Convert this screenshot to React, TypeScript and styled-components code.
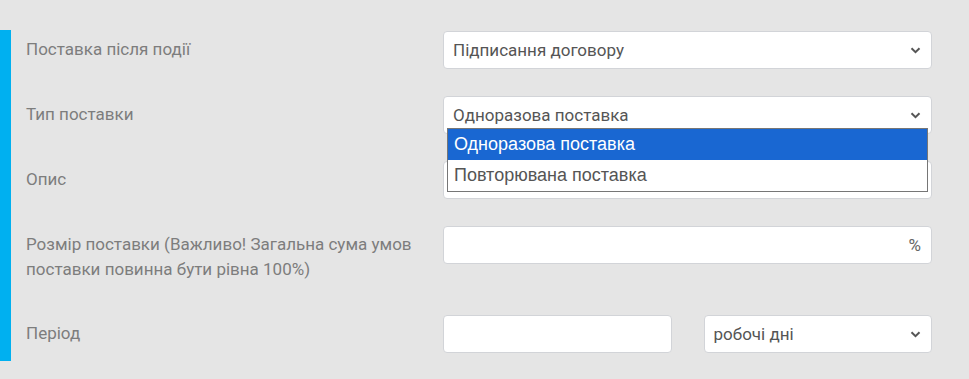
import React from 'react'
import styled, { createGlobalStyle } from 'styled-components'

const GlobalStyle = createGlobalStyle`
  html, body {
    margin: 0;
    padding: 0;
    background: #e5e5e5;
    font-family: Roboto, "Noto Sans", sans-serif;
  }
`

const Section = styled.div`
  margin-top: 30px;
  border-left: 11px solid #00b0f0;
  padding: 1px 37px 8px 15px;
  display: flex;
  flex-direction: column;
  gap: 27px;
`

const Row = styled.div`
  display: grid;
  grid-template-columns: 417px 1fr;
  align-items: start;
`

const Label = styled.div`
  color: #7d7d7d;
  font-size: 17px;
  line-height: 25px;
  padding: 6px 8px 6px 0;
`

const Controls = styled.div<{ $split?: boolean }>`
  position: relative;
  display: grid;
  grid-template-columns: ${(p) => (p.$split ? '1fr 1fr' : '1fr')};
  gap: 32px;
`

const Box = styled.div`
  box-sizing: border-box;
  height: 38px;
  background: #fff;
  border: 1px solid #d2d4d8;
  border-radius: 4px;
  display: flex;
  align-items: center;
  padding: 0 10px 0 9px;
  color: #555;
  font-size: 17px;
`

const Value = styled.span`
  flex: 1;
`

const Suffix = styled.span`
  color: #666;
  font-size: 17px;
`

const Dropdown = styled.div`
  position: absolute;
  top: 32px;
  left: 4px;
  right: 4px;
  background: #fff;
  border: 1px solid #767676;
  z-index: 2;
  font-family: "Liberation Sans", Arial, sans-serif;
  font-size: 18px;
`

const Option = styled.div<{ $active?: boolean }>`
  height: 31px;
  display: flex;
  align-items: center;
  padding: 0 6px;
  background: ${(p) => (p.$active ? '#1967d2' : '#fff')};
  color: ${(p) => (p.$active ? '#fff' : '#555')};
`

const Chevron = () => (
  <svg width="11" height="7" viewBox="0 0 11 7" aria-hidden>
    <path d="M1.5 1.3 L5.5 5.2 L9.5 1.3" fill="none" stroke="#555" strokeWidth="2" />
  </svg>
)

const Select = ({ value }: { value: string }) => (
  <Box>
    <Value>{value}</Value>
    <Chevron />
  </Box>
)

export default function App() {
  return (
    <>
      <GlobalStyle />
      <Section>
        <Row>
          <Label>Поставка після події</Label>
          <Controls>
            <Select value="Підписання договору" />
          </Controls>
        </Row>
        <Row>
          <Label>Тип поставки</Label>
          <Controls>
            <Select value="Одноразова поставка" />
            <Dropdown>
              <Option $active>Одноразова поставка</Option>
              <Option>Повторювана поставка</Option>
            </Dropdown>
          </Controls>
        </Row>
        <Row>
          <Label>Опис</Label>
          <Controls>
            <Box />
          </Controls>
        </Row>
        <Row>
          <Label>Розмір поставки (Важливо! Загальна сума умов поставки повинна бути рівна 100%)</Label>
          <Controls>
            <Box>
              <Value />
              <Suffix>%</Suffix>
            </Box>
          </Controls>
        </Row>
        <Row>
          <Label>Період</Label>
          <Controls $split>
            <Box />
            <Select value="робочі дні" />
          </Controls>
        </Row>
      </Section>
    </>
  )
}
